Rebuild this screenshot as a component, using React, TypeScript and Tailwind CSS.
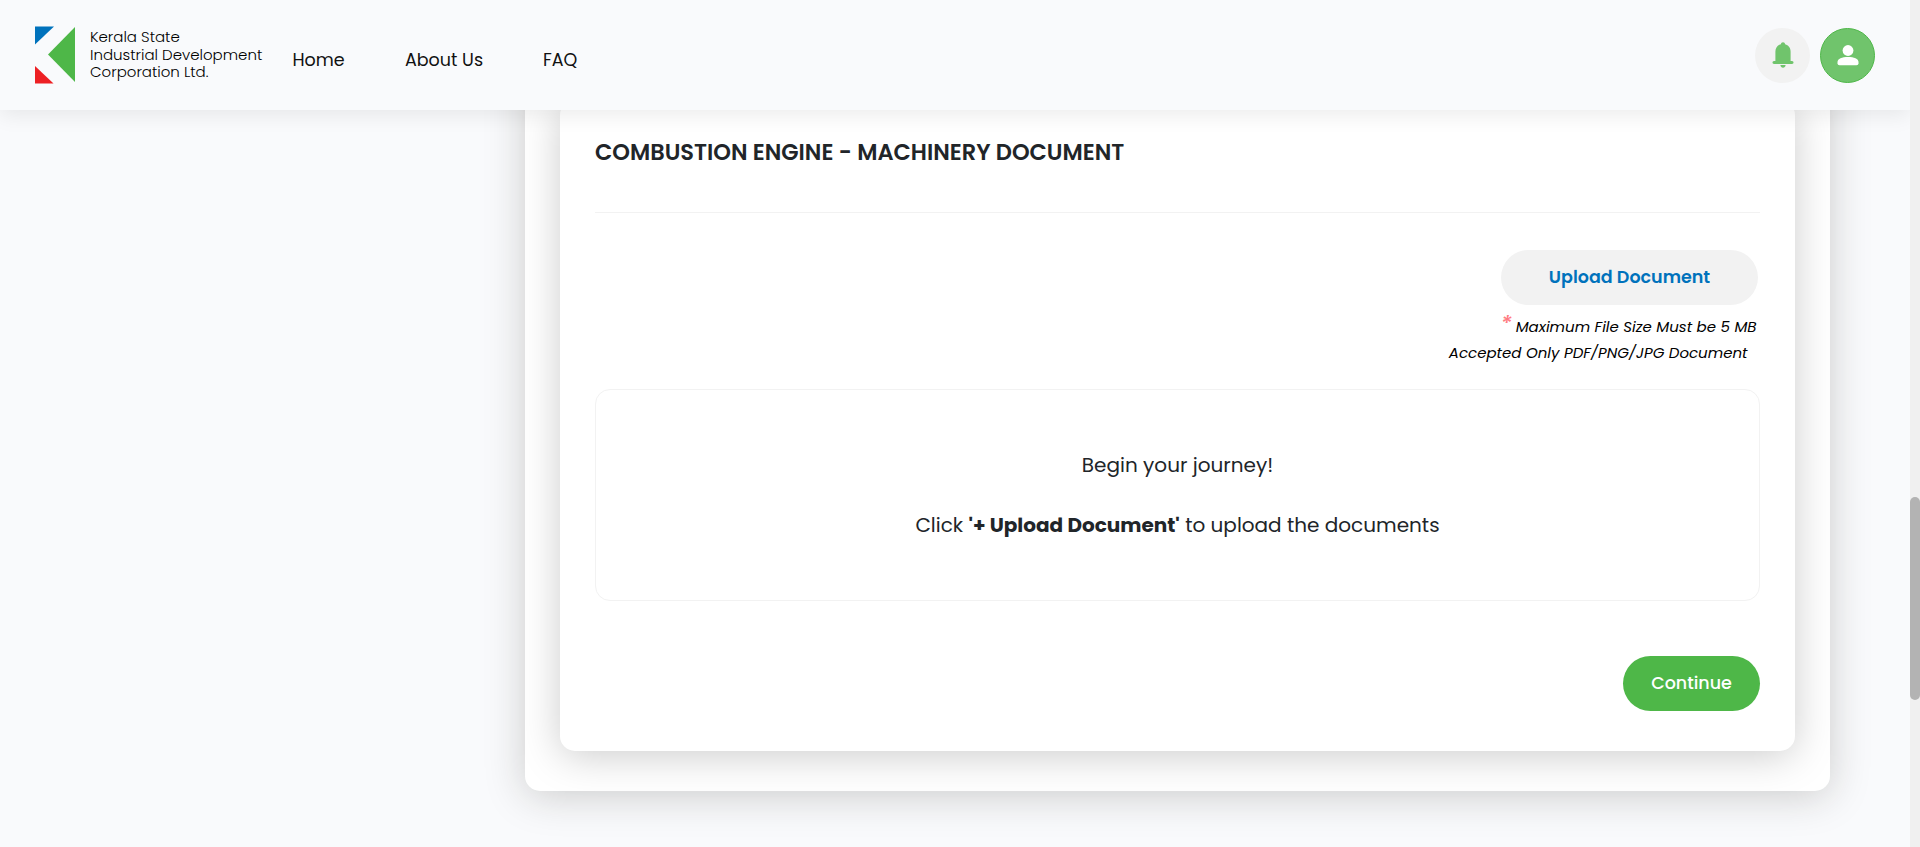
import React from "react";

function Logo() {
  return (
    <div className="flex items-start">
      <svg width="40" height="58" viewBox="0 0 40 58" className="block">
        <path d="M0 0.5H19L0 18.5Z" fill="#0072bc" />
        <path d="M40 1V56L13 28.5Z" fill="#4eb748" />
        <path d="M0 40L18.5 57.5H0Z" fill="#ed2024" />
      </svg>
      <div className="ml-[15px] mt-[2px] whitespace-nowrap text-[15px] font-light leading-[17.5px] text-black">
        <div>Kerala State</div>
        <div>Industrial Development</div>
        <div>Corporation Ltd.</div>
      </div>
    </div>
  );
}

function BellIcon() {
  return (
    <svg width="22" height="26" viewBox="0 0 22 26" fill="#70c46c" className="-mt-px">
      <path d="M11 0.2C12.2 0.2 13 1 13.1 2.3C16.5 3.2 18.6 6 18.6 9.5V19H20C22 19 22 22 20 22H2C0 22 0 19 2 19H3.4V9.5C3.4 6 5.5 3.2 8.9 2.3C9 1 9.8 0.2 11 0.2Z" />
      <path d="M8.4 23H13.6C13.4 24.8 12.4 25.7 11 25.7S8.6 24.8 8.4 23Z" />
    </svg>
  );
}

function PersonIcon() {
  return (
    <svg width="22" height="21" viewBox="0 0 22 21" fill="#fff" className="-mt-px">
      <circle cx="11" cy="5.5" r="5.4" />
      <path d="M0.5 17C0.5 13.5 5 11.9 11 11.9S21.5 13.5 21.5 17V18.3Q21.5 20.3 19.5 20.3H2.5Q0.5 20.3 0.5 18.3Z" />
    </svg>
  );
}

export default function App() {
  return (
    <div className="flex h-[847px] w-full overflow-hidden bg-[#f9fafc] font-['Poppins','Inter',sans-serif] text-[#212529]">
      <div className="flex min-w-0 flex-1 flex-col overflow-hidden">
        <header className="relative z-10 flex h-[110px] shrink-0 items-start bg-[#f9fafc] pl-[35px] pr-[35px] shadow-[0_5px_20px_rgba(0,0,0,0.08)]">
          <div className="mt-[26px] w-[257.5px]">
            <Logo />
          </div>
          <nav className="mt-[47px] flex whitespace-nowrap text-[17.5px] leading-[26px] text-[#111]">
            <a className="w-[112.5px]">Home</a>
            <a className="w-[138px]">About Us</a>
            <a>FAQ</a>
          </nav>
          <div className="ml-auto mt-[28px] flex gap-[10px]">
            <button className="flex size-[55px] items-center justify-center rounded-full bg-[#f2f2f2]">
              <BellIcon />
            </button>
            <button className="flex size-[55px] items-center justify-center rounded-full border border-[#4eb748] bg-[#70c46c]">
              <PersonIcon />
            </button>
          </div>
        </header>

        <main className="ml-[525px] mr-[80px] -mt-[60px] h-[741px] shrink-0 rounded-[15px] bg-white px-[35px] pt-[50px] shadow-[0_5px_40px_#ccc]">
          <section className="flex h-[651px] flex-col rounded-[15px] bg-white px-[35px] shadow-[0_5px_40px_#ccc]">
            <h2 className="h-[113px] shrink-0 whitespace-nowrap border-b border-[#f2f2f2] pt-[35px] text-[22.5px] font-semibold leading-[34px]">
              COMBUSTION ENGINE - MACHINERY DOCUMENT
            </h2>
            <div className="mt-[37px] flex h-[139px] shrink-0 flex-col items-end whitespace-nowrap">
              <button className="mr-[2px] h-[55px] w-[257px] rounded-full bg-[#f2f2f2] text-[17.5px] font-semibold text-[#0072bc]">
                Upload Document
              </button>
              <div className="mr-[3.5px] mt-[9px] text-[15px] italic leading-[26px] text-black">
                <span className="mr-[4px] inline-block w-[11px] -translate-y-px text-[22px] font-medium leading-none text-[#ff7b83]">*</span>
                Maximum File Size Must be 5 MB
              </div>
              <div className="mr-[12.5px] text-[15px] italic leading-[26px] text-black">
                Accepted Only PDF/PNG/JPG Document
              </div>
            </div>
            <div className="flex h-[212px] shrink-0 flex-col items-center justify-center gap-[30px] whitespace-nowrap rounded-[15px] border border-[#f2f2f2] text-[20px] leading-[30px]">
              <p>Begin your journey!</p>
              <p>
                Click <b className="font-bold">'+ Upload Document'</b> to upload the documents
              </p>
            </div>
            <button className="mt-[55px] h-[55px] w-[137px] self-end rounded-full bg-[#4eb748] text-[17.5px] font-medium text-white">
              Continue
            </button>
          </section>
        </main>
      </div>
      <div className="w-[10px] shrink-0 bg-[#f0f0f0] pt-[497px]">
        <div className="h-[203px] w-[10px] rounded-full bg-[#b3b3b3]" />
      </div>
    </div>
  );
}
